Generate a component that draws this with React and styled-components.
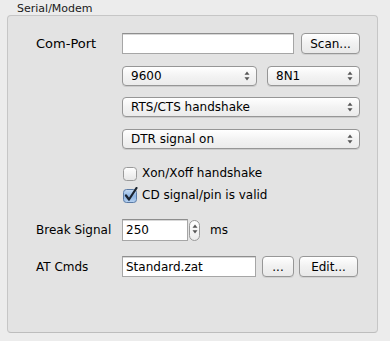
import React from 'react';
import styled, { createGlobalStyle } from 'styled-components';

const Global = createGlobalStyle`
  html, body {
    margin: 0;
    padding: 0;
    background: #ececec;
    font-family: "DejaVu Sans", "Liberation Sans", sans-serif;
    color: #000;
  }
`

const Page = styled.div`
  width: 390px;
  height: 341px;
  padding: 0 12px 0 7px;
  box-sizing: border-box;
`
const Title = styled.div`
  font-size: 11px;
  line-height: 15px;
  padding: 1px 0 0 10px;
  height: 14px;
  color: #1a1a1a;
`
const GroupBox = styled.div`
  box-sizing: border-box;
  height: 318px;
  background: #e3e3e3;
  border: 1px solid #c6c6c6;
  border-bottom-color: #bdbdbd;
  border-radius: 4px;
  padding: 17px 17px 0 28px;
  display: flex;
  flex-direction: column;
`
const Row = styled.div`
  display: flex;
  align-items: center;
  margin-top: ${p => p.$top || 0}px;
  height: ${p => p.$h || 20}px;
`
const Label = styled.div`
  width: 86px;
  flex: none;
  font-size: ${p => p.$size || 12}px;
`
const TextField = styled.div`
  box-sizing: border-box;
  width: ${p => p.$w}px;
  height: ${p => p.$h || 21}px;
  background: #fff;
  border: 1px solid #a6a6a6;
  border-top-color: #8e8e8e;
  box-shadow: inset 0 1px 0 #d8d8d8;
  font-size: 12px;
  padding: 0 0 0 3px;
  display: flex;
  align-items: center;
  flex: none;
`
const PushButton = styled.div`
  box-sizing: border-box;
  width: ${p => p.$w}px;
  height: 21px;
  margin-left: ${p => p.$gap || 0}px;
  border: 1px solid #979797;
  border-radius: 4px;
  background: linear-gradient(#ffffff, #f1f1f1 50%, #e9e9e9);
  box-shadow: 0 1px 0 rgba(0,0,0,0.08);
  font-size: 12px;
  display: flex;
  align-items: center;
  justify-content: center;
  flex: none;
`
const Popup = styled.div`
  box-sizing: border-box;
  width: ${p => p.$w}px;
  height: 20px;
  margin-left: ${p => p.$gap || 0}px;
  border: 1px solid #969696;
  border-radius: 4px;
  background: linear-gradient(#ffffff, #f3f3f3 50%, #ebebeb);
  box-shadow: 0 1px 0 rgba(0,0,0,0.1);
  font-size: 12px;
  display: flex;
  align-items: center;
  justify-content: space-between;
  padding: 0 6px 0 8px;
  flex: none;
`
const Check = styled.div`
  display: flex;
  align-items: center;
  margin-left: 86px;
  font-size: 12px;
  gap: 4px;
`
const Unit = styled.span`
  font-size: 12px;
  margin-left: 10px;
`
const Spinner = styled.div`
  box-sizing: border-box;
  width: 11px;
  height: 21px;
  margin-left: 1px;
  border: 1px solid #9a9a9a;
  border-radius: 6px;
  background: linear-gradient(#fff, #ececec);
  display: flex;
  flex-direction: column;
  align-items: center;
  justify-content: space-between;
  padding: 3px 0;
  flex: none;
`

function Arrows() {
  return (
    <svg width="6" height="10" viewBox="0 0 6 10">
      <path d="M3 0.5 L5.5 3.8 H0.5 Z" fill="#555" />
      <path d="M3 9.5 L5.5 6.2 H0.5 Z" fill="#555" />
    </svg>
  )
}

function SelectBox({w, gap, children}) {
  return (
    <Popup $w={w} $gap={gap}>
      <span>{children}</span>
      <Arrows />
    </Popup>
  )
}

function CheckBox({checked}) {
  return (
    <svg width="16" height="16" viewBox="0 0 16 16" style={{flex: 'none'}}>
      <defs>
        <linearGradient id="cbw" x1="0" y1="0" x2="0" y2="1">
          <stop offset="0" stopColor="#ffffff" />
          <stop offset="1" stopColor="#e6e6e6" />
        </linearGradient>
        <linearGradient id="cbb" x1="0" y1="0" x2="0" y2="1">
          <stop offset="0" stopColor="#c9ddf3" />
          <stop offset="0.5" stopColor="#8fb5e3" />
          <stop offset="1" stopColor="#b6d1f0" />
        </linearGradient>
      </defs>
      <rect x="1.5" y="2.5" width="13" height="13" rx="3"
        fill={checked ? 'url(#cbb)' : 'url(#cbw)'}
        stroke={checked ? '#5b7ba6' : '#9a9a9a'} />
      {checked &&
        <path d="M4 8.5 L7 12.5 L14.5 1" fill="none" stroke="#1b2430"
          strokeWidth="2.2" strokeLinecap="round" strokeLinejoin="round" />}
    </svg>
  )
}

export default function App() {
  return (
    <Page>
      <Global />
      <Title>Serial/Modem</Title>
      <GroupBox>
        <Row $h={21}>
          <Label $size={13}>Com-Port</Label>
          <TextField $w={172} />
          <PushButton $w={59} $gap={7}>Scan...</PushButton>
        </Row>
        <Row $top={12}>
          <Label />
          <SelectBox w={135}>9600</SelectBox>
          <SelectBox w={93} gap={10}>8N1</SelectBox>
        </Row>
        <Row $top={11}>
          <Label />
          <SelectBox w={238}>RTS/CTS handshake</SelectBox>
        </Row>
        <Row $top={12}>
          <Label />
          <SelectBox w={238}>DTR signal on</SelectBox>
        </Row>
        <Row $top={16} $h={16}>
          <Check><CheckBox />Xon/Xoff handshake</Check>
        </Row>
        <Row $top={6} $h={16}>
          <Check><CheckBox checked />CD signal/pin is valid</Check>
        </Row>
        <Row $top={16} $h={22}>
          <Label>Break Signal</Label>
          <TextField $w={66} $h={22}>250</TextField>
          <Spinner><Arrows /></Spinner>
          <Unit>ms</Unit>
        </Row>
        <Row $top={15} $h={21}>
          <Label>AT Cmds</Label>
          <TextField $w={134}>Standard.zat</TextField>
          <PushButton $w={32} $gap={6}>...</PushButton>
          <PushButton $w={59} $gap={5}>Edit...</PushButton>
        </Row>
      </GroupBox>
    </Page>
  )
}
